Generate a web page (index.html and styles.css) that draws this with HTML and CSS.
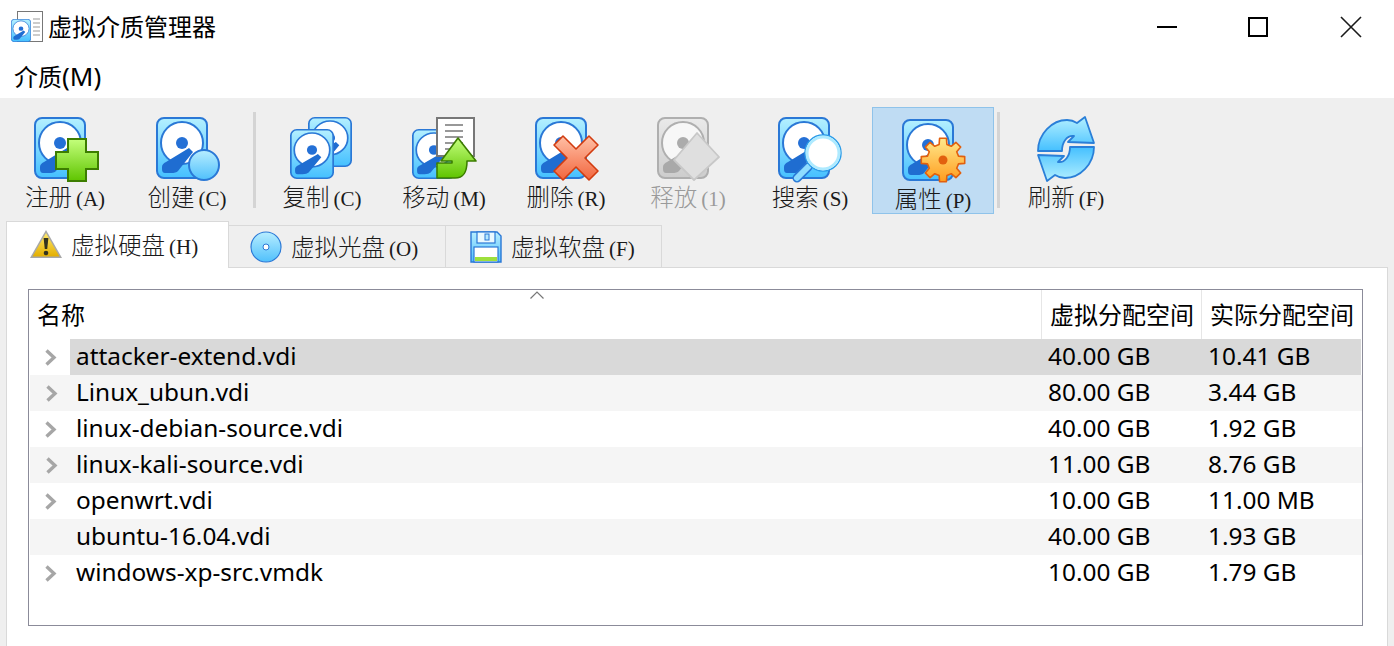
FILE: index.html
```html
<!DOCTYPE html>
<html lang="zh">
<head>
<meta charset="utf-8">
<title>虚拟介质管理器</title>
<link rel="stylesheet" href="styles.css">
</head>
<body>
<svg class="defs" width="0" height="0" aria-hidden="true">
  <defs>
    <linearGradient id="gHdd" x1="0" y1="0" x2="0" y2="1"><stop offset="0" stop-color="#b4f0ff"/><stop offset="1" stop-color="#45c0ff"/></linearGradient>
    <linearGradient id="gGreen" x1="0" y1="0" x2="0" y2="1"><stop offset="0" stop-color="#c4ff7c"/><stop offset="1" stop-color="#5fc400"/></linearGradient>
    <linearGradient id="gBall" x1="0" y1="0" x2="0" y2="1"><stop offset="0" stop-color="#b8eeff"/><stop offset="1" stop-color="#50c0fc"/></linearGradient>
    <linearGradient id="gRed" x1="0" y1="0" x2="0" y2="1"><stop offset="0" stop-color="#ffc0a6"/><stop offset="1" stop-color="#f2663e"/></linearGradient>
    <linearGradient id="gGear" x1="0" y1="0" x2="0" y2="1"><stop offset="0" stop-color="#ffe98c"/><stop offset="1" stop-color="#ff9c1e"/></linearGradient>
    <linearGradient id="gWarn" x1="0" y1="0" x2="0" y2="1"><stop offset="0" stop-color="#ffe96a"/><stop offset="1" stop-color="#e3ae00"/></linearGradient>
    <symbol id="hdd" viewBox="0 0 52 62" preserveAspectRatio="none">
      <rect x="1" y="1" width="50" height="60" rx="7" fill="url(#gHdd)" stroke="#2a78d6" stroke-width="2"/>
      <circle cx="26" cy="26" r="21" fill="#fff" stroke="#2a78d6" stroke-width="2"/>
      <circle cx="26" cy="26" r="6" fill="#2470d6"/>
      <path d="M6 50Q6 47 10 45L33 31L37 35L22 54Q20 56 15 56H9Q6 56 6 52Z" fill="#1f6dd1"/>
    </symbol>
    <symbol id="refresh" viewBox="0 0 80 72">
      <path d="M12 39C12 22 26 8 41 8C45 8 48 9 51 11L59 5L68 31L42 30L48 24C41 23 36 30 36 39Z" fill="url(#gHdd)" stroke="#2a7fd8" stroke-width="1.8" stroke-linejoin="round"/>
      <path d="M12 39C12 22 26 8 41 8C45 8 48 9 51 11L59 5L68 31L42 30L48 24C41 23 36 30 36 39Z" transform="rotate(180 40 37)" fill="url(#gHdd)" stroke="#2a7fd8" stroke-width="1.8" stroke-linejoin="round"/>
    </symbol>
  </defs>
</svg>

<header class="titlebar">
  <svg class="app-icon" width="32" height="32" viewBox="0 0 32 32">
    <rect x="6.5" y="0.5" width="25" height="30" fill="#fff" stroke="#777"/>
    <path d="M22 8h7M22 12h7M22 16h7M22 20h7M22 24h7" stroke="#999"/>
    <use href="#hdd" x="0" y="8" width="20" height="23"/>
  </svg>
  <span class="title">虚拟介质管理器</span>
  <div class="winctl">
    <svg class="ctl" width="90" height="24" viewBox="0 0 90 24"><path d="M37 12H57" stroke="#000" stroke-width="2"/></svg>
    <svg class="ctl" width="94" height="24" viewBox="0 0 94 24"><rect x="39" y="3" width="18" height="18" fill="none" stroke="#000" stroke-width="2"/></svg>
    <svg class="ctl" width="90" height="24" viewBox="0 0 90 24"><path d="M37 2L57 22M57 2L37 22" stroke="#1a1a1a" stroke-width="1.6" fill="none"/></svg>
  </div>
</header>

<nav class="menubar"><span class="menu-item">介质<span class="menu-key">(M)</span></span></nav>

<div class="toolbar">
  <button class="tool">
    <svg class="tool-icon" viewBox="0 0 80 72"><use href="#hdd" x="9" y="5" width="52" height="62"/>
      <path d="M43 27H61V40H73V57H61V69H43V57H31V40H43Z" fill="url(#gGreen)" stroke="#3c7d00" stroke-width="2"/></svg>
    <span class="tool-label">注册<span class="key">(A)</span></span>
  </button>
  <button class="tool">
    <svg class="tool-icon" viewBox="0 0 80 72"><use href="#hdd" x="9" y="5" width="52" height="62"/>
      <circle cx="57" cy="53" r="15" fill="url(#gBall)" stroke="#2a78d6" stroke-width="2"/></svg>
    <span class="tool-label">创建<span class="key">(C)</span></span>
  </button>
  <span class="sep"></span>
  <button class="tool">
    <svg class="tool-icon" viewBox="0 0 80 72"><use href="#hdd" x="26" y="5" width="44" height="50"/><use href="#hdd" x="8" y="17" width="44" height="50"/></svg>
    <span class="tool-label">复制<span class="key">(C)</span></span>
  </button>
  <button class="tool">
    <svg class="tool-icon" viewBox="0 0 80 72"><use href="#hdd" x="8" y="17" width="44" height="50"/>
      <rect x="33" y="6" width="37" height="38" fill="#fff" stroke="#777" stroke-width="2"/>
      <path d="M41 13H59M41 19H59M41 25H59M41 31H59M41 37H49" stroke="#777" stroke-width="1.6"/>
      <path d="M54 26L72 49H63C63 60 60 66 51 66H33V51H48V49H37Z" fill="url(#gGreen)" stroke="#3c7d00" stroke-width="1.6" stroke-linejoin="round"/></svg>
    <span class="tool-label">移动<span class="key">(M)</span></span>
  </button>
  <button class="tool">
    <svg class="tool-icon" viewBox="0 0 80 72"><use href="#hdd" x="9" y="5" width="52" height="62"/>
      <path transform="translate(50 46)" d="M-13-22L0-9L13-22L22-13L9 0L22 13L13 22L0 9L-13 22L-22 13L-9 0L-22-13Z" fill="url(#gRed)" stroke="#d23c10" stroke-width="1.6" stroke-linejoin="round"/></svg>
    <span class="tool-label">删除<span class="key">(R)</span></span>
  </button>
  <button class="tool tool-off">
    <svg class="tool-icon" viewBox="0 0 80 72"><use href="#hdd" x="9" y="5" width="52" height="62"/>
      <path d="M49 21L71 45L46 68L26 48Z" fill="#cfcfcf" stroke="#a0a0a0" stroke-width="1.8" stroke-linejoin="round"/></svg>
    <span class="tool-label">释放<span class="key">(1)</span></span>
  </button>
  <button class="tool">
    <svg class="tool-icon" viewBox="0 0 80 72"><use href="#hdd" x="8" y="5" width="52" height="62"/>
      <path d="M38 55L27 66" stroke="#2a78d6" stroke-width="9" stroke-linecap="round"/>
      <path d="M38 55L27 66" stroke="#8fdcff" stroke-width="6" stroke-linecap="round"/>
      <circle cx="53" cy="41" r="18" fill="#fff" stroke="#2a9be8" stroke-width="1.5"/>
      <circle cx="53" cy="41" r="16" fill="#fff" stroke="#aeeaff" stroke-width="3"/></svg>
    <span class="tool-label">搜索<span class="key">(S)</span></span>
  </button>
  <button class="tool tool-active">
    <svg class="tool-icon" viewBox="0 0 80 72"><use href="#hdd" x="9" y="5" width="52" height="62"/>
      <path transform="translate(50 46)" d="M-3.9-15.5L-3.4-21.7H3.4L3.9-15.5L8.2-13.7L12.9-17.7L17.7-12.9L13.7-8.2L15.5-3.9L21.7-3.4V3.4L15.5 3.9L13.7 8.2L17.7 12.9L12.9 17.7L8.2 13.7L3.9 15.5L3.4 21.7H-3.4L-3.9 15.5L-8.2 13.7L-12.9 17.7L-17.7 12.9L-13.7 8.2L-15.5 3.9L-21.7 3.4V-3.4L-15.5-3.9L-13.7-8.2L-17.7-12.9L-12.9-17.7L-8.2-13.7Z" fill="url(#gGear)" stroke="#e2600e" stroke-width="1.6" stroke-linejoin="round"/>
      <circle cx="50" cy="46" r="4.5" fill="#e2600e"/></svg>
    <span class="tool-label">属性<span class="key">(P)</span></span>
  </button>
  <span class="sep"></span>
  <button class="tool">
    <svg class="tool-icon" viewBox="0 0 80 72"><use href="#refresh" x="0" y="0" width="80" height="72"/></svg>
    <span class="tool-label">刷新<span class="key">(F)</span></span>
  </button>
</div>

<div class="tabs">
  <div class="tab tab-active">
    <svg class="tab-icon" viewBox="0 0 32 32"><path d="M16 1L32 29H0Z" fill="#a8a8a8"/><path d="M16 4L29.5 27.5H2.5Z" fill="url(#gWarn)"/><path d="M13.6 9H18.4L17.2 20H14.8Z" fill="#33331f"/><circle cx="16" cy="24" r="2.3" fill="#33331f"/></svg>
    <span class="tab-label">虚拟硬盘<span class="key">(H)</span></span>
  </div>
  <div class="tab tab-disc">
    <svg class="tab-icon" viewBox="0 0 32 32"><circle cx="16" cy="16" r="15" fill="url(#gBall)" stroke="#2a78d6" stroke-width="1.2"/><circle cx="16" cy="16" r="3" fill="#fff" stroke="#2a78d6"/></svg>
    <span class="tab-label">虚拟光盘<span class="key">(O)</span></span>
  </div>
  <div class="tab tab-floppy">
    <svg class="tab-icon" viewBox="0 0 32 32"><path d="M1 1H27L31 5V31H1Z" fill="url(#gBall)" stroke="#2a78d6" stroke-width="1.4"/><rect x="7" y="1" width="18" height="11" fill="#eaf9ff" stroke="#2a78d6" stroke-width="1.2"/><rect x="15" y="3" width="4" height="6" fill="#b4e8ff" stroke="#2a78d6"/><rect x="4" y="16" width="24" height="15" fill="#fff" stroke="#2a78d6" stroke-width="1.2"/><rect x="5" y="26" width="22" height="4" fill="#9ee03c"/></svg>
    <span class="tab-label">虚拟软盘<span class="key">(F)</span></span>
  </div>
</div>

<main class="pane">
  <div class="table">
    <svg class="sort" width="14" height="8" viewBox="0 0 14 8"><path d="M0.5 7.5L7 1L13.5 7.5" fill="none" stroke="#777" stroke-width="1.2"/></svg>
    <div class="thead">
      <div class="th">名称</div>
      <div class="th">虚拟分配空间</div>
      <div class="th">实际分配空间</div>
    </div>
    <div class="row selected"><span class="toggle"><svg class="chev" viewBox="0 0 12 17"><path d="M1.5 1.5L9 8.5L1.5 15.5"/></svg></span><span class="cell name">attacker-extend.vdi</span><span class="cell">40.00 GB</span><span class="cell">10.41 GB</span></div>
    <div class="row"><span class="toggle"><svg class="chev" viewBox="0 0 12 17"><path d="M1.5 1.5L9 8.5L1.5 15.5"/></svg></span><span class="cell name">Linux_ubun.vdi</span><span class="cell">80.00 GB</span><span class="cell">3.44 GB</span></div>
    <div class="row"><span class="toggle"><svg class="chev" viewBox="0 0 12 17"><path d="M1.5 1.5L9 8.5L1.5 15.5"/></svg></span><span class="cell name">linux-debian-source.vdi</span><span class="cell">40.00 GB</span><span class="cell">1.92 GB</span></div>
    <div class="row"><span class="toggle"><svg class="chev" viewBox="0 0 12 17"><path d="M1.5 1.5L9 8.5L1.5 15.5"/></svg></span><span class="cell name">linux-kali-source.vdi</span><span class="cell">11.00 GB</span><span class="cell">8.76 GB</span></div>
    <div class="row"><span class="toggle"><svg class="chev" viewBox="0 0 12 17"><path d="M1.5 1.5L9 8.5L1.5 15.5"/></svg></span><span class="cell name">openwrt.vdi</span><span class="cell">10.00 GB</span><span class="cell">11.00 MB</span></div>
    <div class="row"><span class="toggle"></span><span class="cell name">ubuntu-16.04.vdi</span><span class="cell">40.00 GB</span><span class="cell">1.93 GB</span></div>
    <div class="row"><span class="toggle"><svg class="chev" viewBox="0 0 12 17"><path d="M1.5 1.5L9 8.5L1.5 15.5"/></svg></span><span class="cell name">windows-xp-src.vmdk</span><span class="cell">10.00 GB</span><span class="cell">1.79 GB</span></div>
  </div>
</main>
</body>
</html>
```

FILE: styles.css
```css
* { box-sizing: border-box; }
html, body { margin: 0; height: 100%; }
body {
  display: flex;
  flex-direction: column;
  height: 646px;
  overflow: hidden;
  background: #efefef;
  color: #000;
  font-family: "Noto Sans", "Noto Sans CJK SC", sans-serif;
}
.defs { display: block; flex: none; }

.titlebar {
  flex: none;
  height: 56px;
  background: #fff;
  display: flex;
  align-items: center;
  padding-left: 11px;
}
.app-icon { flex: none; margin-top: -3px; }
.title { font: 24px/32px "Noto Sans CJK SC", sans-serif; margin-left: 5px; margin-top: -5px; }
.winctl { margin-left: auto; display: flex; margin-top: -2px; }
.ctl { display: block; }

.menubar {
  flex: none;
  height: 42px;
  background: #fff;
  padding-left: 14px;
  font: 24px/40px "Noto Sans", "Noto Sans CJK SC", sans-serif;
}
.menu-key { font-size: 26px; }

.toolbar {
  flex: none;
  height: 123px;
  display: flex;
  align-items: flex-start;
  padding: 9px 0 0 4px;
}
.tool {
  flex: none;
  width: 122px;
  height: 107px;
  padding: 5px 0 0;
  border: 1px solid transparent;
  background: none;
  display: flex;
  flex-direction: column;
  align-items: center;
  font: inherit;
  color: #1a1a1a;
}
.tool-icon { display: block; width: 80px; height: 72px; margin-top: -1px; flex: none; }
.tool-label {
  font: 300 23.5px/32px "Noto Sans CJK SC", sans-serif;
  margin-top: -4px;
  white-space: nowrap;
}
.key {
  font-family: "Liberation Serif", serif;
  font-size: 21px;
  margin-left: 4px;
}
.tool-off { color: #9a9a9a; }
.tool-off .tool-icon { filter: grayscale(1) opacity(.5); }
.tool-active {
  background: #bfdcf3;
  border-color: #8fc3ea;
  padding-top: 7px;
  margin: 0 -2px 0 1px;
}
.sep {
  flex: none;
  width: 3px;
  height: 96px;
  margin: 5px 5px 0;
  background: #d4d4d4;
}

.tabs {
  flex: none;
  display: flex;
  align-items: flex-end;
  height: 46px;
  padding-left: 6px;
}
.tab {
  flex: none;
  height: 42px;
  display: flex;
  align-items: center;
  gap: 9px;
  padding-top: 2px;
  border-top: 1px solid #d9d9d9;
  border-right: 1px solid #d9d9d9;
}
.tab-disc { width: 217px; padding-left: 21px; }
.tab-floppy { width: 216px; padding-left: 24px; }
.tab-active {
  width: 223px;
  height: 47px;
  margin-bottom: -1px;
  padding: 1px 0 0 23px;
  background: #fff;
  border-left: 1px solid #d9d9d9;
  position: relative;
  z-index: 1;
}
.tab-icon { flex: none; width: 32px; height: 32px; margin-top: -2px; }
.tab-label { font: 300 23.5px/32px "Noto Sans CJK SC", sans-serif; white-space: nowrap; color: #1a1a1a; }

.pane {
  flex: 1;
  margin: 0 6px;
  background: #fff;
  border: 1px solid #d9d9d9;
  border-bottom: 0;
  padding: 21px 0 0 21px;
}
.table {
  width: 1335px;
  height: 337px;
  border: 1px solid #8b8b99;
  position: relative;
}
.sort { position: absolute; left: 501px; top: 1px; display: block; }
.thead {
  display: grid;
  grid-template-columns: 1013px 160px 159px;
  height: 49px;
  font: 24px/48px "Noto Sans CJK SC", sans-serif;
}
.th { padding-left: 8px; border-right: 1px solid #e6e6e6; white-space: nowrap; overflow: hidden; }
.th:last-child { border-right: 0; }

.row {
  display: grid;
  grid-template-columns: 41px 971px 160px 160px;
  height: 36px;
  font-size: 24.4px;
  line-height: 34px;
}
.toggle { display: flex; align-items: center; padding-left: 16px; }
.cell { padding-left: 7px; white-space: nowrap; }
.name { padding-left: 6px; }
.selected .cell { background: #d9d9d9; }
.row:nth-child(even) { background: #f5f5f5; margin-left: 1px; grid-template-columns: 40px 971px 160px 160px; }
.chev { width: 12px; height: 17px; display: block; fill: none; stroke: #a6a6a6; stroke-width: 3.4; }
```
